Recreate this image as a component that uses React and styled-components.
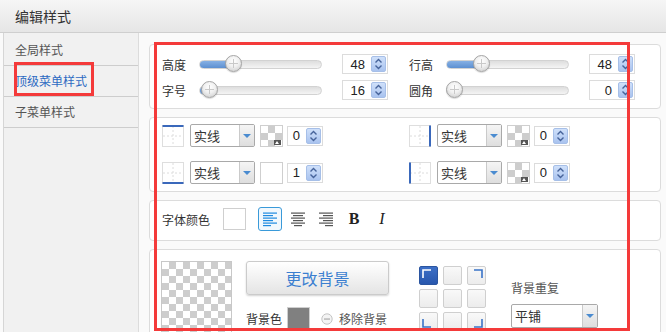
import React from "react";
import styled, { createGlobalStyle } from "styled-components";

const GlobalStyle = createGlobalStyle`
  html, body { margin: 0; padding: 0; background: #fafafa; }
  body {
    font-family: "Noto Sans CJK SC", "Liberation Sans", sans-serif;
    font-size: 12px;
    color: #333;
  }
`;

const Page = styled.div`
  position: relative;
  width: 666px;
  height: 332px;
  overflow: hidden;
  background: #fafafa;
`;

const Header = styled.div`
  height: 32px;
  line-height: 32px;
  padding-left: 15px;
  border-bottom: 1px solid #cfcfcf;
  background: linear-gradient(#f6f6f6, #e6e6e6);
  font-size: 14px;
  color: #333;
`;

const Body = styled.div`
  display: flex;
  height: 299px;
`;

const Sidebar = styled.div`
  flex-shrink: 0;
  width: 134px;
  margin-left: 3px;
  padding-top: 2px;
  border-left: 1px solid #d6d6d6;
  border-right: 1px solid #dcdcdc;
  background: #f1f1f1;
`;

const NavItem = styled.div`
  height: 30px;
  line-height: 30px;
  padding-left: 11px;
  border-bottom: 1px solid #cdcdcd;
  font-size: 12px;
  color: ${p => (p.$active ? "#2d6ac2" : "#555")};
`;

const Main = styled.div`
  flex: 1;
  min-width: 0;
  display: flex;
  flex-direction: column;
  gap: 8px;
  padding: 11px 5px 0 10px;
`;

const Panel = styled.div`
  flex-shrink: 0;
  background: #fff;
  border: 1px solid #dcdcdc;
  border-radius: 4px;
  padding: ${p => p.$pad};
`;

const Annotation = styled.div`
  position: absolute;
  left: ${p => p.$x}px;
  top: ${p => p.$y}px;
  width: ${p => p.$w}px;
  height: ${p => p.$h}px;
  box-sizing: border-box;
  border: 3px solid #f43a3a;
  pointer-events: none;
`;

/* ---------- sliders ---------- */

const SliderGrid = styled.div`
  display: grid;
  grid-template-columns: 226px 226px;
  column-gap: 21px;
  row-gap: 6px;
`;

const Field = styled.div`
  display: flex;
  align-items: center;
  height: ${p => p.$h || 20}px;
`;

const Label = styled.span`
  width: ${p => (p.$w ? `${p.$w}px` : "auto")};
  flex-shrink: 0;
  font-size: 12px;
  color: #333;
  white-space: nowrap;
`;

const Track = styled.div`
  position: relative;
  width: 123px;
  height: 9px;
  margin-right: 20px;
  box-sizing: border-box;
  border: 1px solid #d2d2d2;
  border-radius: 5px;
  background: linear-gradient(#dedede, #f4f4f4);
`;

const Fill = styled.div`
  height: 100%;
  border-radius: 5px;
  background: linear-gradient(#86b0e4, #5d90d1);
`;

const Thumb = styled.div`
  position: absolute;
  top: 50%;
  width: 17px;
  height: 17px;
  margin: -9px 0 0 -9px;
  box-sizing: border-box;
  border-radius: 50%;
  border: 1px solid #a4a4a4;
  background:
    linear-gradient(#c9c9c9, #c9c9c9) center / 1px 9px no-repeat,
    linear-gradient(#c9c9c9, #c9c9c9) center / 9px 1px no-repeat,
    radial-gradient(circle at 50% 35%, #ffffff 0%, #f0f0f0 45%, #c6c6c6 100%);
  box-shadow: 0 1px 1px rgba(0, 0, 0, 0.15);
`;

const Slider = ({ value }) => (
  <Track>
    <Fill style={{ width: value }} />
    <Thumb style={{ left: value }} />
  </Track>
);

/* ---------- spinner ---------- */

const SpinBox = styled.div`
  display: flex;
  align-items: center;
  flex-shrink: 0;
  width: ${p => p.$w}px;
  height: 20px;
  box-sizing: border-box;
  border: 1px solid #dcdcdc;
  background: #fff;
`;

const SpinValue = styled.span`
  flex: 1;
  text-align: right;
  padding-right: 6px;
  font-family: "Liberation Sans", Arial, sans-serif;
  font-size: 13px;
  color: #222;
`;

const SpinButton = styled.div`
  width: 15px;
  height: 16px;
  margin-right: 1px;
  box-sizing: border-box;
  border: 1px solid #a6bfe8;
  border-radius: 2px;
  background: linear-gradient(#cfe0fa, #a9c3ef);
  display: flex;
  align-items: center;
  justify-content: center;
`;

const Spinner = ({ value, w }) => (
  <SpinBox $w={w}>
    <SpinValue>{value}</SpinValue>
    <SpinButton>
      <svg width="9" height="12" viewBox="0 0 9 12">
        <path d="M1.5 4.5 L4.5 1.5 L7.5 4.5" fill="none" stroke="#46639a" strokeWidth="1.4" />
        <path d="M1.5 7.5 L4.5 10.5 L7.5 7.5" fill="none" stroke="#46639a" strokeWidth="1.4" />
      </svg>
    </SpinButton>
  </SpinBox>
);

/* ---------- border rows ---------- */

const BorderGrid = styled.div`
  display: grid;
  grid-template-columns: 247px 1fr;
  row-gap: 14px;
`;

const BorderRow = styled.div`
  display: flex;
  align-items: center;
  height: 23px;
`;

const SideIcon = ({ side }) => {
  const lines = {
    top: "M0.5 1 H21.5",
    bottom: "M0.5 21 H21.5",
    left: "M1 0.5 V21.5",
    right: "M21 0.5 V21.5",
  };
  return (
    <svg width="22" height="22" viewBox="0 0 22 22" style={{ flexShrink: 0 }}>
      <rect x="0.5" y="0.5" width="21" height="21" fill="#fff" stroke="#dedede" />
      <path d="M11 1 V21 M1 11 H21" stroke="#dcdcdc" strokeDasharray="2 2" />
      <path d={lines[side]} stroke="#3a68bb" strokeWidth="2" />
    </svg>
  );
};

const Select = styled.div`
  display: flex;
  width: ${p => p.$w}px;
  height: ${p => p.$h}px;
  margin: ${p => p.$m || "0"};
  box-sizing: border-box;
  border: 1px solid #a9a9a9;
  border-radius: 2px;
  background: #fff;
  flex-shrink: 0;
`;

const SelectText = styled.span`
  flex: 1;
  padding-left: 3px;
  font-size: 13px;
  line-height: ${p => p.$h - 2}px;
  color: #333;
`;

const SelectArrow = styled.span`
  width: 14px;
  border-left: 1px solid #cacaca;
  background: linear-gradient(#f5f5f5, #dedede);
  display: flex;
  align-items: center;
  justify-content: center;
  &::after {
    content: "";
    border-left: 4px solid transparent;
    border-right: 4px solid transparent;
    border-top: 4px solid #4a8bd0;
  }
`;

const Dropdown = ({ text, w, h, m }) => (
  <Select $w={w} $h={h} $m={m}>
    <SelectText $h={h}>{text}</SelectText>
    <SelectArrow />
  </Select>
);

const checker = `
  background-color: #fff;
  background-image:
    linear-gradient(45deg, #cdcdcd 25%, transparent 25%, transparent 75%, #cdcdcd 75%),
    linear-gradient(45deg, #cdcdcd 25%, transparent 25%, transparent 75%, #cdcdcd 75%);
  background-size: 14px 14px;
  background-position: 0 0, 7px 7px;
`;

const Swatch = styled.div`
  position: relative;
  flex-shrink: 0;
  width: 23px;
  height: ${p => p.$h || 22}px;
  margin: ${p => p.$m || "0"};
  box-sizing: border-box;
  border: 1px solid #cfcfcf;
  ${p => (p.$checker ? checker : `background: ${p.$color || "#fff"};`)}
`;

const SwatchBadge = styled.span`
  position: absolute;
  right: 1px;
  bottom: 1px;
  width: 7px;
  height: 5px;
  background: #555;
  &::after {
    content: "";
    position: absolute;
    left: 1px;
    top: 1px;
    border-left: 2.5px solid transparent;
    border-right: 2.5px solid transparent;
    border-bottom: 3px solid #fff;
  }
`;

const BorderSet = ({ side, swatch, value }) => (
  <BorderRow>
    <SideIcon side={side} />
    <Dropdown text="实线" w={65} h={23} m="0 5px 0 6px" />
    <Swatch $checker={swatch === "checker"} $m="0 4px 0 0">
      {swatch === "checker" && <SwatchBadge />}
    </Swatch>
    <Spinner value={value} w={36} />
  </BorderRow>
);

/* ---------- font row ---------- */

const FontRow = styled.div`
  display: flex;
  align-items: center;
  height: 24px;
`;

const ToolButton = styled.div`
  width: 24px;
  height: 24px;
  margin-right: 4px;
  box-sizing: border-box;
  border: 1px solid ${p => (p.$active ? "#3a9ad9" : "transparent")};
  border-radius: 3px;
  background: ${p => (p.$active ? "#f2f8fd" : "transparent")};
  display: flex;
  align-items: center;
  justify-content: center;
  font-family: "Liberation Serif", "Times New Roman", serif;
  font-size: 16px;
  font-weight: ${p => (p.$bold ? 700 : 400)};
  font-style: ${p => (p.$italic ? "italic" : "normal")};
  color: #222;
`;

const AlignIcon = ({ align, color }) => {
  const widths = [14, 10, 14, 10, 14, 8];
  return (
    <svg width="16" height="16" viewBox="0 0 16 16">
      {widths.map((w, i) => {
        const x = align === "left" ? 1 : align === "right" ? 15 - w : 8 - w / 2;
        return <rect key={i} x={x} y={1.5 + i * 2.5} width={w} height="1.2" fill={color} />;
      })}
    </svg>
  );
};

/* ---------- background panel ---------- */

const BgLayout = styled.div`
  display: flex;
  align-items: flex-start;
`;

const Preview = styled.div`
  width: 71px;
  height: 80px;
  box-sizing: border-box;
  border: 1px solid #c8c8c8;
  flex-shrink: 0;
  ${checker}
`;

const BgColumn = styled.div`
  display: flex;
  flex-direction: column;
  flex-shrink: 0;
  width: 143px;
  margin-left: 14px;
`;

const ChangeButton = styled.div`
  height: 34px;
  box-sizing: border-box;
  border: 1px solid #cbcbcb;
  border-radius: 3px;
  background: linear-gradient(#ffffff, #e4e4e4);
  box-shadow: 0 1px 2px rgba(0, 0, 0, 0.18);
  display: flex;
  align-items: center;
  justify-content: center;
  font-size: 16px;
  color: #3b7fd0;
`;

const BgColorRow = styled.div`
  display: flex;
  align-items: center;
  margin-top: 12px;
  height: 23px;
`;

const RemoveText = styled.span`
  margin-left: 6px;
  font-size: 12px;
  color: #555;
  white-space: nowrap;
`;

const PosGrid = styled.div`
  display: grid;
  flex-shrink: 0;
  grid-template-columns: repeat(3, 19px);
  grid-auto-rows: 19px;
  gap: 4px 5px;
  margin: 5px 0 0 30px;
`;

const PosCell = styled.div`
  box-sizing: border-box;
  border: 1px solid ${p => (p.$active ? "#2b55a0" : "#cfcfcf")};
  border-radius: 2px;
  background: ${p =>
    p.$active ? "linear-gradient(#3c6fc7, #2857ad)" : "linear-gradient(#f9f9f9, #ececec)"};
  display: flex;
  align-items: ${p => (p.$corner && p.$corner[0] === "b" ? "flex-end" : "flex-start")};
  justify-content: ${p => (p.$corner && p.$corner[1] === "r" ? "flex-end" : "flex-start")};
  padding: 2px;
`;

const Corner = ({ corner, color }) => {
  const d = {
    tl: "M1 9 V1 H9",
    tr: "M0 1 H8 V9",
    bl: "M1 0 V8 H9",
    br: "M0 8 H8 V0",
  };
  return (
    <svg width="9" height="9" viewBox="0 0 9 9">
      <path d={d[corner]} fill="none" stroke={color} strokeWidth="1.6" />
    </svg>
  );
};

const RepeatColumn = styled.div`
  display: flex;
  flex-direction: column;
  flex-shrink: 0;
  margin-left: 25px;
`;

const RepeatLabel = styled.span`
  margin-top: 19px;
  font-size: 12px;
  line-height: 16px;
  color: #555;
`;

const positions = [
  { corner: "tl", active: true },
  {},
  { corner: "tr" },
  {},
  {},
  {},
  { corner: "bl" },
  {},
  { corner: "br" },
];

export default function App() {
  return (
    <Page>
      <GlobalStyle />
      <Header>编辑样式</Header>
      <Body>
        <Sidebar>
          <NavItem>全局样式</NavItem>
          <NavItem $active>顶级菜单样式</NavItem>
          <NavItem>子菜单样式</NavItem>
        </Sidebar>
        <Main>
          <Panel $pad="9px 12px 8px 12px">
            <SliderGrid>
              <Field>
                <Label $w={37}>高度</Label>
                <Slider value={34} />
                <Spinner value="48" w={46} />
              </Field>
              <Field>
                <Label $w={37}>行高</Label>
                <Slider value={35} />
                <Spinner value="48" w={46} />
              </Field>
              <Field>
                <Label $w={37}>字号</Label>
                <Slider value={10} />
                <Spinner value="16" w={46} />
              </Field>
              <Field>
                <Label $w={37}>圆角</Label>
                <Slider value={8} />
                <Spinner value="0" w={46} />
              </Field>
            </SliderGrid>
          </Panel>

          <Panel $pad="6px 12px 7px 12px">
            <BorderGrid>
              <BorderSet side="top" swatch="checker" value="0" />
              <BorderSet side="right" swatch="checker" value="0" />
              <BorderSet side="bottom" swatch="white" value="1" />
              <BorderSet side="left" swatch="checker" value="0" />
            </BorderGrid>
          </Panel>

          <Panel $pad="6px 12px 9px 12px">
            <FontRow>
              <Label>字体颜色</Label>
              <Swatch $m="0 12px 0 13px" />
              <ToolButton $active>
                <AlignIcon align="left" color="#1f8ae0" />
              </ToolButton>
              <ToolButton>
                <AlignIcon align="center" color="#555" />
              </ToolButton>
              <ToolButton>
                <AlignIcon align="right" color="#555" />
              </ToolButton>
              <ToolButton $bold>B</ToolButton>
              <ToolButton $italic>I</ToolButton>
            </FontRow>
          </Panel>

          <Panel $pad="11px 11px 0 11px">
            <BgLayout>
              <Preview />
              <BgColumn>
                <ChangeButton>更改背景</ChangeButton>
                <BgColorRow>
                  <Label>背景色</Label>
                  <Swatch $color="#808080" $h={23} $m="0 0 0 5px" />
                  <svg width="12" height="12" viewBox="0 0 12 12" style={{ marginLeft: 11 }}>
                    <circle cx="6" cy="6" r="5.2" fill="#f4f4f4" stroke="#c4c4c4" />
                    <rect x="3" y="5.4" width="6" height="1.3" fill="#b0b0b0" />
                  </svg>
                  <RemoveText>移除背景</RemoveText>
                </BgColorRow>
              </BgColumn>
              <PosGrid>
                {positions.map((p, i) => (
                  <PosCell key={i} $active={p.active} $corner={p.corner}>
                    {p.corner && <Corner corner={p.corner} color={p.active ? "#fff" : "#3a74c8"} />}
                  </PosCell>
                ))}
              </PosGrid>
              <RepeatColumn>
                <RepeatLabel>背景重复</RepeatLabel>
                <Dropdown text="平铺" w={87} h={24} m="8px 0 0 0" />
              </RepeatColumn>
            </BgLayout>
          </Panel>
        </Main>
      </Body>
      <Annotation $x={14} $y={62} $w={80} $h={34} />
      <Annotation $x={154} $y={42} $w={476} $h={289} />
    </Page>
  );
}
